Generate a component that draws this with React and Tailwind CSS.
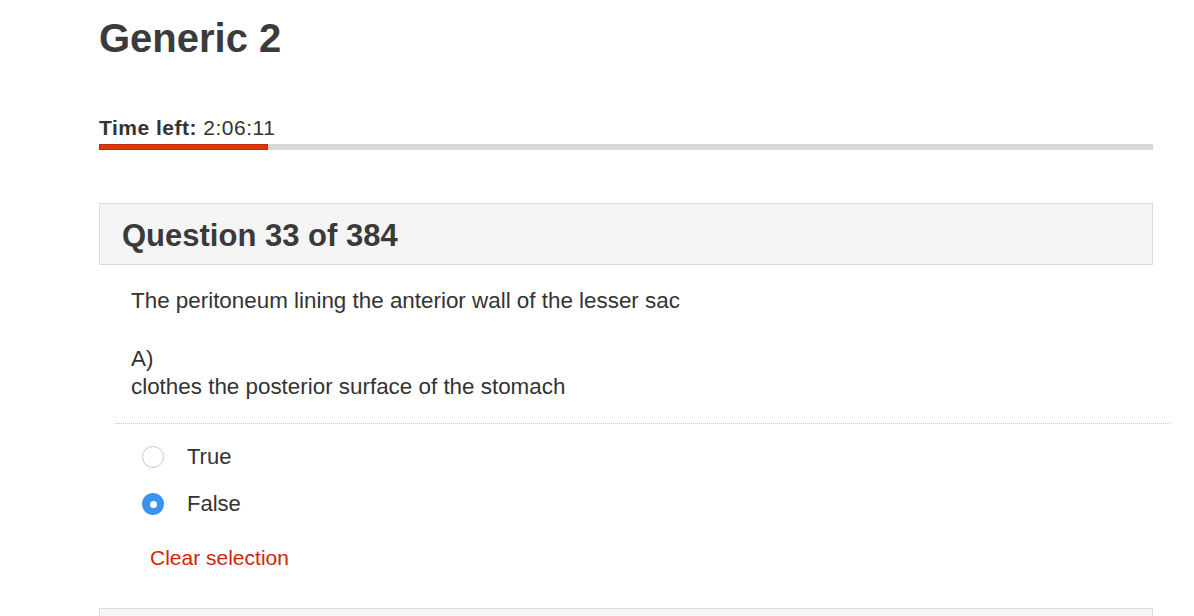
import React, { useState } from 'react';

export default function App() {
  const [answer, setAnswer] = useState('false');
  const progress = 16;

  const options = [
    { id: 'true', label: 'True' },
    { id: 'false', label: 'False' },
  ];

  return (
    <div className="min-h-screen bg-white font-['Liberation_Sans',Arial,sans-serif] text-[#333]">
      <div className="ml-[99px] w-[1054px] pt-[14px]">
        <h1 className="text-[40px] font-bold leading-[48px] text-[#3b3b3b]">Generic 2</h1>

        {/* Timer */}
        <div className="mt-[55px] text-[21px] leading-[22px] tracking-[0.5px] text-[#333]">
          <span className="font-bold">Time left:</span> 2:06:11
        </div>
        <div className="mt-[5px] h-[6px] w-full bg-[#d8d8d8]">
          <div className="h-full bg-[#e03612] border border-[#c52a0c]" style={{ width: `${progress}%` }} />
        </div>

        {/* Question header */}
        <div className="mt-[53px] border border-[#dcdcdc] bg-[#f5f5f5] px-[22px] pt-[15px] pb-[12px]">
          <h2 className="text-[31px] font-bold leading-[33px] text-[#3a3a3a]">Question 33 of 384</h2>
        </div>

        {/* Question body */}
        <div className="pl-[32px] pt-[22px] text-[22.4px] leading-[28px] text-[#333]">
          <p>The peritoneum lining the anterior wall of the lesser sac</p>
          <p className="mt-[30px]">A)</p>
          <p>clothes the posterior surface of the stomach</p>
        </div>

        <div className="ml-[16px] mr-[-17px] mt-[22px] border-t border-dotted border-[#c8c8c8]" />

        <div className="flex flex-col gap-[25px] pl-[43px] pt-[22px]">
          {options.map((o) => {
            const checked = answer === o.id;
            return (
              <label key={o.id} className="flex cursor-pointer items-center gap-[23px] text-[22px] leading-[22px]" onClick={() => setAnswer(o.id)}>
                {checked ? (
                  <span className="flex h-[22px] w-[22px] items-center justify-center rounded-full bg-[#3b93f0]">
                    <span className="h-[7px] w-[7px] rounded-full bg-white" />
                  </span>
                ) : (
                  <span className="h-[22px] w-[22px] rounded-full border border-[#c9c9c9] bg-white" />
                )}
                <span>{o.label}</span>
              </label>
            );
          })}
        </div>

        <button className="ml-[51px] mt-[32px] text-[21px] leading-[22px] text-[#d3230a]" onClick={() => setAnswer(null)}>
          Clear selection
        </button>

        <div className="mt-[36px] h-[40px] border border-[#dcdcdc] bg-[#f5f5f5]" />
      </div>
    </div>
  );
}
